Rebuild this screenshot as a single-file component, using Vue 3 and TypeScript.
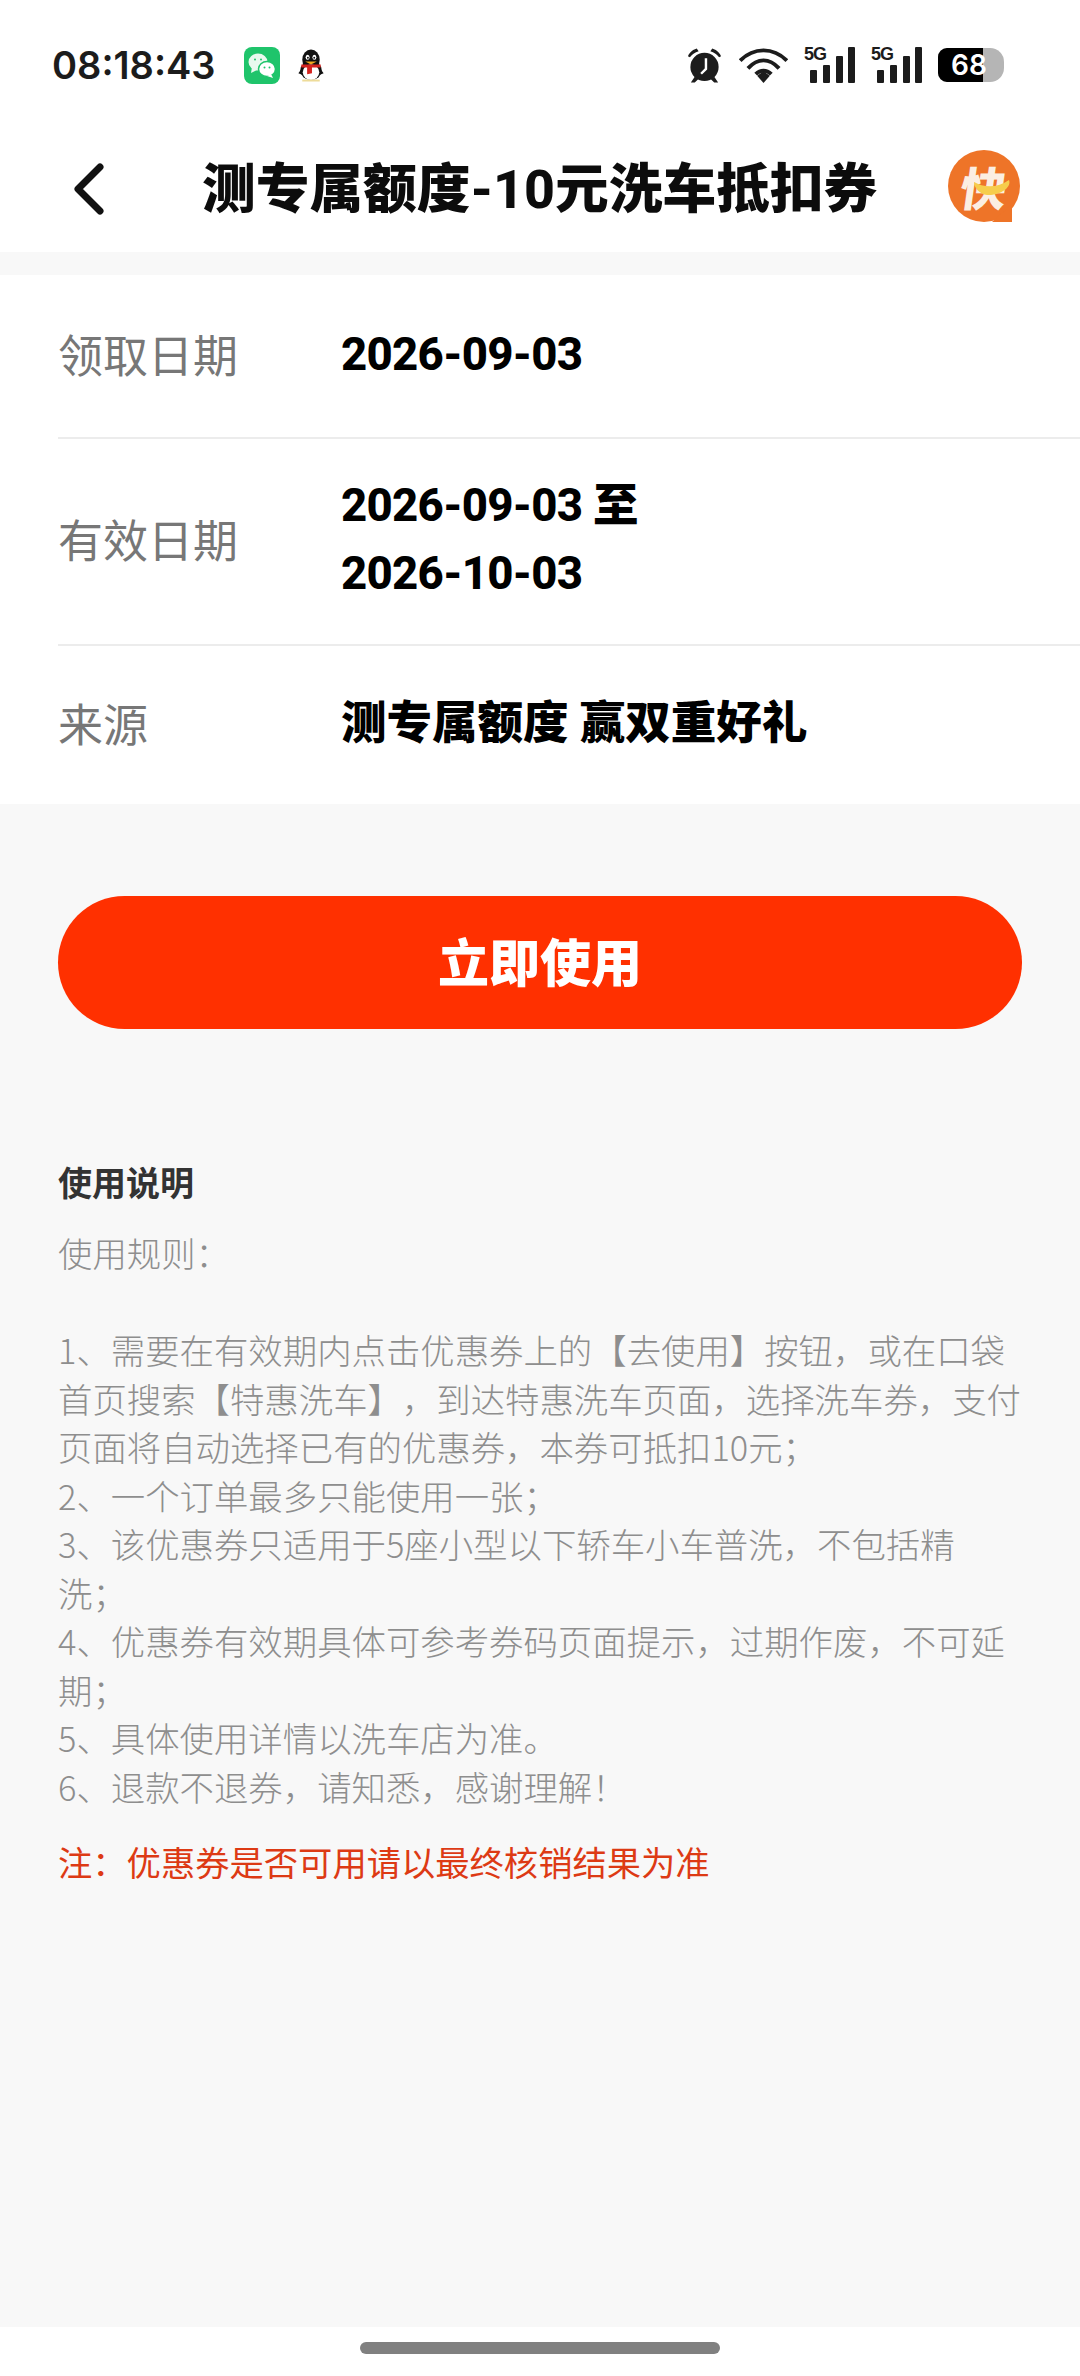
<template>
  <div class="page">
    <div class="top">
      <div class="status-bar">
        <span class="time">08:18:43</span>
        <svg class="wechat" width="36" height="37" viewBox="0 0 36 37">
          <rect width="36" height="37" rx="8" fill="#1fc46b" />
          <ellipse cx="14" cy="15" rx="9.500" ry="8.500" fill="#e9f9ef" />
          <path d="M8 20l-1 6 6-3z" fill="#e9f9ef" />
          <ellipse cx="23" cy="22" rx="8.500" ry="7.500" fill="#fff" stroke="#1fc46b" stroke-width="1.500" />
          <path d="M27 27l2 4-6-2z" fill="#fff" />
          <circle cx="11" cy="12.500" r="1" fill="#1fc46b" />
          <circle cx="17" cy="12.500" r="1" fill="#1fc46b" />
          <circle cx="20.500" cy="20.500" r="1" fill="#1fc46b" />
          <circle cx="25.500" cy="20.500" r="1" fill="#1fc46b" />
        </svg>
        <svg class="qq" width="28" height="33" viewBox="0 0 28 34">
          <ellipse cx="14" cy="11" rx="9" ry="10.500" fill="#111" />
          <ellipse cx="14" cy="22" rx="11" ry="10" fill="#111" />
          <path d="M1 25l5-7v9zM27 25l-5-7v9z" fill="#111" />
          <ellipse cx="14" cy="24" rx="8.500" ry="8" fill="#fff" />
          <ellipse cx="10.500" cy="8.500" rx="2" ry="2.600" fill="#fff" />
          <ellipse cx="17.500" cy="8.500" rx="2" ry="2.600" fill="#fff" />
          <circle cx="10.800" cy="9" r="1" fill="#111" />
          <circle cx="17.300" cy="9" r="1" fill="#111" />
          <path d="M8 13h12l-6 3z" fill="#f0a91e" />
          <path d="M4 16h20v3H15v6l-5 1v-7H4z" fill="#d5231f" />
          <rect x="5" y="31.500" width="18" height="2" fill="#eedc9a" />
        </svg>
        <div class="status-right">
          <svg width="37" height="38" viewBox="0 0 38 38" fill="#1c1c1c">
            <circle cx="19" cy="21" r="14.500" />
            <path d="M2 10c2-5 6-7 9-8l2 3c-4 1-6 3-9 6zM36 10c-2-5-6-7-9-8l-2 3c4 1 6 3 9 6z" />
            <path d="M9 31l-4 6h4l4-4zM29 31l4 6h-4l-4-4z" />
            <path d="M20.500 12v11l-5 5" fill="none" stroke="#fff" stroke-width="2.500" />
          </svg>
          <svg width="49" height="36" viewBox="0 0 50 37" fill="none" stroke="#1c1c1c" stroke-width="4">
            <path d="M1 14C15 0 35 0 49 14" />
            <path d="M9 22C19 11 31 11 41 22" />
            <path d="M17 28c5-5 11-5 16 0" />
            <path d="M18.500 29.500 25 25l6.500 4.500L25 37z" fill="#1c1c1c" stroke="none" />
          </svg>
          <div v-for="n in 2" :key="n" class="signal">
            <span class="five-g">5G</span>
            <i class="bar b1"></i><i class="bar b2"></i><i class="bar b3"></i><i class="bar b4"></i>
          </div>
          <div class="battery">
            <div class="battery-fill"></div>
            <span class="battery-num">68</span>
          </div>
        </div>
      </div>
      <div class="nav">
        <svg class="back" width="32" height="52" viewBox="0 0 32 52" fill="none" stroke="#111" stroke-width="7" stroke-linecap="round" stroke-linejoin="round">
          <path d="M27 4 5 26l22 22" />
        </svg>
        <div class="title">测专属额度-10元洗车抵扣券</div>
        <div class="logo">
          <svg class="logo-bg" width="72" height="72" viewBox="0 0 72 72">
            <circle cx="36" cy="36" r="36" fill="#ee7428" />
            <path d="M44 72h20V54z" fill="#ee7428" />
          </svg>
          <span class="logo-text">快</span>
          <svg class="logo-smile" width="38" height="16" viewBox="0 0 38 16">
            <path d="M1 2c10 6 24 6 35-2 3 8-10 16-22 15C7 14 1 8 1 2z" fill="#f6cd4c" />
          </svg>
        </div>
      </div>
    </div>

    <div class="info">
      <div v-for="row in rows" :key="row.label" class="info-row">
        <div class="label">{{ row.label }}</div>
        <div class="value">
          <div v-for="line in row.lines" :key="line" :class="{ date: /^\d/.test(line) }">{{ line }}</div>
        </div>
      </div>
    </div>

    <button class="use-btn"><span class="use-text">立即使用</span></button>

    <div class="desc">
      <div class="desc-title">使用说明</div>
      <div class="rules">
        <div v-for="(line, i) in ruleLines" :key="i" class="rule-line">{{ line }}</div>
      </div>
      <div class="note">注：优惠券是否可用请以最终核销结果为准</div>
    </div>

    <div class="home-bar"><div class="home-handle"></div></div>
  </div>
</template>

<script setup lang="ts">
interface InfoRow {
  label: string;
  lines: string[];
}

const rows: InfoRow[] = [
  { label: '领取日期', lines: ['2026-09-03'] },
  { label: '有效日期', lines: ['2026-09-03 至', '2026-10-03'] },
  { label: '来源', lines: ['测专属额度 赢双重好礼'] },
];

const ruleLines: string[] = [
  '使用规则：',
  '\u00a0',
  '1、需要在有效期内点击优惠券上的【去使用】按钮，或在口袋',
  '首页搜索【特惠洗车】，到达特惠洗车页面，选择洗车券，支付',
  '页面将自动选择已有的优惠券，本券可抵扣10元；',
  '2、一个订单最多只能使用一张；',
  '3、该优惠券只适用于5座小型以下轿车小车普洗，不包括精',
  '洗；',
  '4、优惠券有效期具体可参考券码页面提示，过期作废，不可延',
  '期；',
  '5、具体使用详情以洗车店为准。',
  '6、退款不退券，请知悉，感谢理解！',
];
</script>

<style>
body {
  margin: 0;
  background: #f7f7f7;
}
</style>

<style scoped>
.page {
  width: 1080px;
  height: 2376px;
  display: flex;
  flex-direction: column;
  background: #f8f8f8;
  font-family: "Noto Sans CJK SC", "Liberation Sans", sans-serif;
  text-spacing-trim: space-all;
  overflow: hidden;
}

.top {
  background: #fff;
  height: 252px;
}

.status-bar {
  height: 126px;
  display: flex;
  align-items: center;
  padding: 4px 52px 0 52px;
  box-sizing: border-box;
}

.time {
  font-family: Inter, sans-serif;
  font-weight: 600;
  font-size: 38px;
  color: #1c1c1c;
  width: 154px;
  white-space: nowrap;
}

.wechat {
  margin-left: 38px;
}

.qq {
  margin-left: 17px;
}

.status-right {
  margin-left: auto;
  display: flex;
  align-items: center;
  gap: 16px;
  margin-right: 24px;
}

.signal {
  position: relative;
  width: 51px;
  height: 36px;
}

.five-g {
  position: absolute;
  left: 0;
  top: -3px;
  font-family: "Liberation Sans", sans-serif;
  font-weight: 700;
  font-size: 18px;
  letter-spacing: -1px;
  color: #1c1c1c;
}

.bar {
  position: absolute;
  bottom: 0;
  width: 7px;
  background: #1c1c1c;
  border-radius: 1px;
}

.b1 { left: 6px; height: 13px; }
.b2 { left: 19px; height: 18px; }
.b3 { left: 32px; height: 27px; }
.b4 { left: 44px; height: 36px; }

.battery {
  position: relative;
  width: 66px;
  height: 34px;
  background: #b5b5b5;
  border-radius: 9px 14px 14px 9px;
  overflow: hidden;
}

.battery-fill {
  width: 45px;
  height: 34px;
  background: #000;
}

.battery-num {
  position: absolute;
  left: 13px;
  top: 0;
  line-height: 34px;
  font-family: Inter, sans-serif;
  font-weight: 600;
  font-size: 28px;
  color: #fff;
}

.nav {
  height: 126px;
  display: flex;
  align-items: center;
  position: relative;
  padding-left: 73px;
}

.back {
  flex: none;
}

.title {
  margin-left: 97px;
  padding-bottom: 9px;
  font-family: Roboto, "Noto Sans CJK SC", sans-serif;
  font-size: 53.700px;
  font-weight: 800;
  color: #0c0c0c;
  white-space: nowrap;
}

.logo {
  position: absolute;
  left: 948px;
  top: 24px;
  width: 72px;
  height: 72px;
  display: flex;
  align-items: center;
  justify-content: center;
}

.logo-bg {
  position: absolute;
  left: 0;
  top: 0;
}

.logo-text {
  position: relative;
  color: #fbeee2;
  font-size: 46px;
  font-weight: 900;
  line-height: 1;
  transform: skewX(-8deg);
}

.logo-smile {
  position: absolute;
  left: 25px;
  top: 30px;
}

.info {
  margin-top: 23px;
  background: #fff;
  padding-left: 58px;
  height: 529px;
  display: flex;
  flex-direction: column;
}

.info-row {
  display: flex;
  align-items: center;
  border-bottom: 2px solid #ececec;
  flex: none;
  box-sizing: border-box;
  height: 164px;
}

.info-row:nth-child(2) {
  height: 207px;
}

.info-row:last-child {
  border-bottom: none;
  height: 158px;
}

.label {
  width: 283px;
  padding-bottom: 6px;
  font-size: 45px;
  color: #777;
}

.value {
  padding-bottom: 3px;
  font-family: Roboto, "Noto Sans CJK SC", sans-serif;
  font-size: 45.500px;
  font-weight: 800;
  line-height: 68px;
  color: #000;
}

.date {
  letter-spacing: -0.700px;
}

.use-btn {
  margin: 92px 58px 0;
  height: 133px;
  border: none;
  border-radius: 67px;
  background: #ff3000;
  color: #fff;
  font-family: inherit;
  font-size: 51px;
  font-weight: 900;
  flex: none;
}

.use-text {
  display: block;
  padding-bottom: 6px;
}

.desc {
  margin-top: 129px;
  padding: 0 58px;
}

.desc-title {
  font-size: 34px;
  font-weight: 700;
  color: #333;
  line-height: 48px;
}

.rules {
  margin-top: 22px;
}

.rule-line {
  font-size: 34.400px;
  font-weight: 300;
  line-height: 48.500px;
  color: #8e8e8e;
  white-space: nowrap;
}

.note {
  margin-top: 27px;
  font-size: 34.300px;
  line-height: 48px;
  color: #dd3a14;
}

.home-bar {
  margin-top: auto;
  height: 49px;
  background: #fff;
  display: flex;
  justify-content: center;
  padding-top: 15px;
  box-sizing: border-box;
  flex: none;
}

.home-handle {
  width: 360px;
  height: 12px;
  border-radius: 6px;
  background: #808080;
}
</style>
